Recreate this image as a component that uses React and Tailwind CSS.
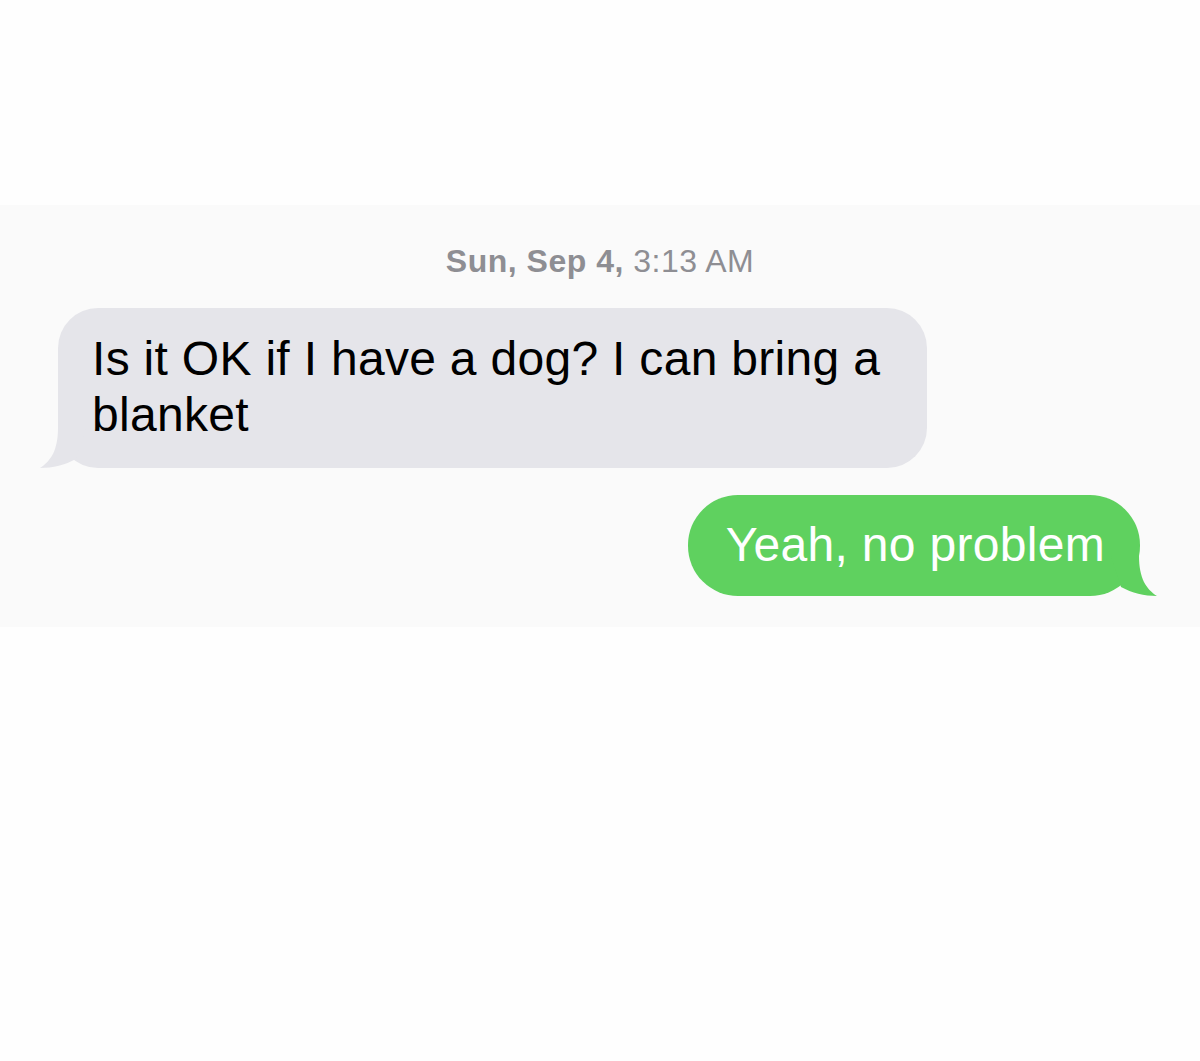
const font = { fontFamily: '"Liberation Sans", Arial, sans-serif' };

const GreyTail = () => (
  <svg className="absolute -left-[18px] bottom-0" width="50" height="40" viewBox="0 0 50 40">
    <path d="M18 0 C18 22 11 33 0 40 C13 40 25 37 36 31 L46 0 Z" fill="#e5e5ea" />
  </svg>
);

const GreenTail = () => (
  <svg className="absolute -right-[17px] bottom-0" width="50" height="40" viewBox="0 0 50 40">
    <path d="M32 0 C32 22 39 33 50 40 C37 40 25 37 14 31 L4 0 Z" fill="#5fd15f" />
  </svg>
);

export default function App() {
  return (
    <div className="min-h-[1061px] w-[1200px] bg-[#fefefe]" style={font}>
      <div className="h-[205px]" />
      <div className="bg-[#fafafa] pt-[38px] pb-[31px]">
        {/* timestamp */}
        <div className="text-center text-[32px] leading-[37px] tracking-[0.5px] text-[#8e8e93]">
          <span className="font-bold">Sun, Sep 4,</span> 3:13 AM
        </div>

        {/* incoming */}
        <div className="mt-[28px] pl-[58px]">
          <div className="relative w-[869px] rounded-[40px] bg-[#e5e5ea] pl-[34px] pr-[40px] pt-[23px] pb-[25px] text-[48px] leading-[56px] tracking-[0.3px] text-black">
            <GreyTail />
            <span className="relative">Is it OK if I have a dog? I can bring a blanket</span>
          </div>
        </div>

        {/* outgoing */}
        <div className="mt-[27px] flex justify-end pr-[60px]">
          <div className="relative rounded-[50px] bg-[#5fd15f] pl-[38px] pr-[35px] pt-[22px] pb-[23px] text-[48px] leading-[56px] tracking-[0.3px] text-white">
            <GreenTail />
            <span className="relative">Yeah, no problem</span>
          </div>
        </div>
      </div>
    </div>
  );
}
